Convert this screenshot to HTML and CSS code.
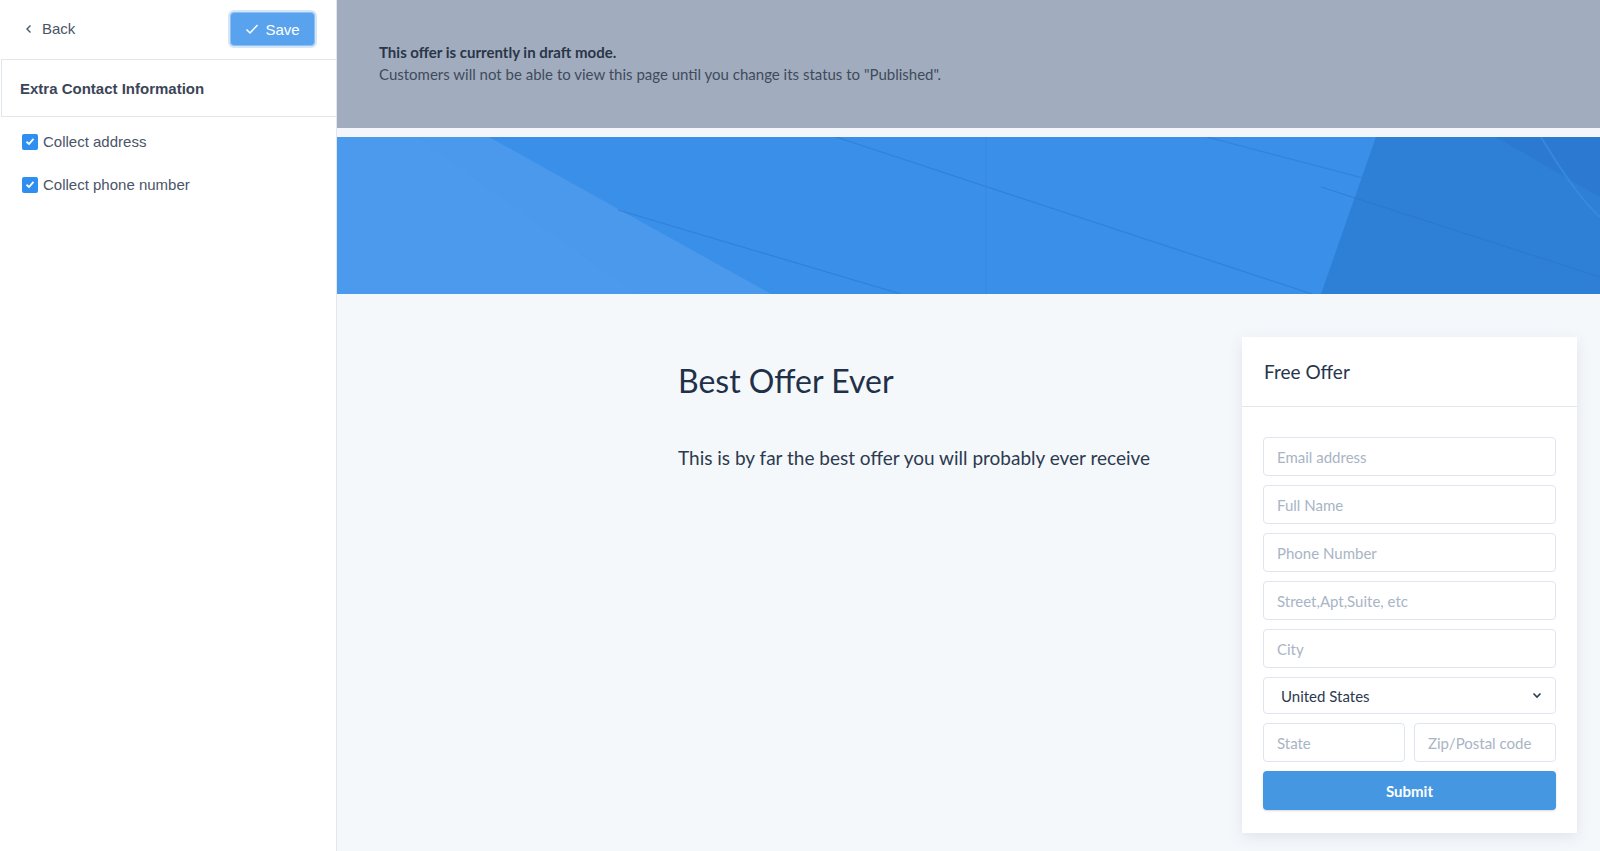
FILE: index.html
```html
<!DOCTYPE html>
<html>
<head>
    <title>Offer Editor</title>
    <link rel="stylesheet" href="styles.css">
</head>
<body>
    <div class="app">
        <aside class="sidebar">
            <div class="sidebar-top">
                <a class="back-link" href="#">
                    <svg width="10" height="10" viewBox="0 0 10 10"><path d="M6.5 1.5 L3 5 L6.5 8.5" fill="none" stroke="#4a5468" stroke-width="1.4"/></svg>
                    Back
                </a>
                <button class="save-btn">
                    <svg width="14" height="12" viewBox="0 0 14 12"><path d="M1.5 6.5 L5 10 L12.5 2" fill="none" stroke="#fff" stroke-width="1.5"/></svg>
                    Save
                </button>
            </div>
            <div class="section-title">Extra Contact Information</div>
            <div class="options">
                <label class="option"><span class="checkbox"><svg width="10" height="9" viewBox="0 0 10 9"><path d="M1.5 4.8 L4 7 L8.5 1.8" fill="none" stroke="#fff" stroke-width="1.8"/></svg></span>Collect address</label>
                <label class="option"><span class="checkbox"><svg width="10" height="9" viewBox="0 0 10 9"><path d="M1.5 4.8 L4 7 L8.5 1.8" fill="none" stroke="#fff" stroke-width="1.8"/></svg></span>Collect phone number</label>
            </div>
        </aside>

        <main class="preview">
            <div class="draft-banner">
                <strong>This offer is currently in draft mode.</strong>
                <p>Customers will not be able to view this page until you change its status to "Published".</p>
            </div>
            <div class="hero">
                <svg class="hero-art" viewBox="0 0 1263 157" preserveAspectRatio="none">
                    <rect width="1263" height="157" fill="#3a8fe9"/>
                    <polygon points="0,0 152,0 434,157 0,157" fill="#4a99ec"/>
                    <polygon points="0,0 80,0 300,157 0,157" fill="#4d9bed" opacity="0.5"/>
                    <line x1="281" y1="73" x2="564" y2="157" stroke="#2f7cd3" stroke-width="1.2" opacity="0.7"/>
                    <line x1="499" y1="0" x2="975" y2="157" stroke="#2f7cd3" stroke-width="1.2" opacity="0.7"/>
                    <line x1="870" y1="0" x2="1263" y2="103" stroke="#2f7cd3" stroke-width="1.2" opacity="0.6"/>
                    <line x1="649" y1="0" x2="649" y2="157" stroke="#3585df" stroke-width="1" opacity="0.5"/>
                    <polygon points="1039,0 1263,0 1263,157 984,157" fill="#2e7fd6"/>
                    <polygon points="1159,0 1263,0 1263,60" fill="#2a78cf" opacity="0.8"/>
                    <path d="M1204 0 Q1240 60 1263 80" fill="none" stroke="#3a8be2" stroke-width="2" opacity="0.8"/>
                    <line x1="984" y1="50" x2="1263" y2="140" stroke="#2a74c8" stroke-width="1" opacity="0.6"/>
                </svg>
            </div>
            <div class="content">
                <div class="offer-text">
                    <h1>Best Offer Ever</h1>
                    <p>This is by far the best offer you will probably ever receive</p>
                </div>
                <div class="card">
                    <div class="card-header">Free Offer</div>
                    <form class="card-body">
                        <input type="text" placeholder="Email address">
                        <input type="text" placeholder="Full Name">
                        <input type="text" placeholder="Phone Number">
                        <input type="text" placeholder="Street,Apt,Suite, etc">
                        <input type="text" placeholder="City">
                        <div class="select-wrap">
                            <select>
                                <option>United States</option>
                            </select>
                            <svg class="chevron" width="10" height="7" viewBox="0 0 10 7"><path d="M1.5 1.5 L5 5 L8.5 1.5" fill="none" stroke="#2c3a4f" stroke-width="1.6"/></svg>
                        </div>
                        <div class="row">
                            <input type="text" placeholder="State">
                            <input type="text" placeholder="Zip/Postal code">
                        </div>
                        <button type="button" class="submit-btn">Submit</button>
                    </form>
                </div>
            </div>
        </main>
    </div>
</body>
</html>
```

FILE: styles.css
```css
* {
    box-sizing: border-box;
}
body {
    margin: 0;
    font-family: "Liberation Sans", Arial, sans-serif;
    background-color: #f5f8fb;
    color: #2c3a4f;
}
.app {
    display: flex;
    height: 851px;
    overflow: hidden;
}

/* sidebar */
.sidebar {
    width: 337px;
    flex-shrink: 0;
    background-color: #fff;
    border-right: 1px solid #e3e7ed;
}
.sidebar-top {
    height: 59px;
    display: flex;
    align-items: center;
    justify-content: space-between;
    padding: 0 21px 2px 24px;
}
.back-link {
    display: flex;
    align-items: center;
    gap: 8px;
    color: #4a5468;
    text-decoration: none;
    font-size: 15px;
}
.save-btn {
    display: flex;
    align-items: center;
    justify-content: center;
    gap: 6px;
    width: 85px;
    height: 34px;
    margin-top: 1px;
    background-color: #58a2ee;
    color: #fff;
    font-family: "Liberation Sans", Arial, sans-serif;
    font-size: 15px;
    border: 1px solid #8fbff2;
    border-radius: 4px;
    box-shadow: 0 0 0 2px #d4e6fa;
}
.section-title {
    height: 58px;
    display: flex;
    align-items: center;
    padding-left: 18px;
    margin-left: 1px;
    border: 1px solid #e1e5ec;
    border-right: none;
    font-size: 15px;
    font-weight: bold;
    color: #3c4558;
}
.options {
    padding: 16px 0 0 22px;
}
.option {
    display: flex;
    align-items: center;
    gap: 5px;
    height: 17px;
    margin-bottom: 26px;
    font-size: 15px;
    color: #4a5468;
}
.checkbox {
    width: 16px;
    height: 16px;
    border-radius: 2px;
    background-color: #2f8ff0;
    display: flex;
    align-items: center;
    justify-content: center;
}

/* preview */
.preview {
    flex: 1;
    font-family: Lato, "Open Sans", sans-serif;
    display: flex;
    flex-direction: column;
}
.draft-banner {
    background-color: #a1adbe;
    padding: 42px 0 0 42px;
    font-size: 15px;
    color: #2a3547;
    border-bottom: 9px solid #f3f7fb;
    height: 137px;
}
.draft-banner strong {
    display: block;
    line-height: 20px;
}
.draft-banner p {
    margin: 2px 0 0;
    line-height: 20px;
    color: #3f4a5c;
}
.hero {
    height: 157px;
}
.hero-art {
    display: block;
    width: 100%;
    height: 157px;
}
.content {
    flex: 1;
    display: flex;
    padding: 43px 23px 0 341px;
}
.offer-text {
    flex: 1;
}
.offer-text h1 {
    margin: 24px 0 0;
    font-size: 32px;
    font-weight: normal;
    line-height: 40px;
    color: #1f3049;
}
.offer-text p {
    margin: 45px 0 0;
    font-size: 19px;
    line-height: 24px;
    color: #2c3a4f;
}
.card {
    width: 335px;
    height: 496px;
    background-color: #fff;
    box-shadow: 0 4px 14px rgba(40, 60, 90, 0.1);
}
.card-header {
    height: 70px;
    display: flex;
    align-items: center;
    padding-left: 22px;
    font-size: 19px;
    color: #26354b;
    border-bottom: 1px solid #e3e8ee;
}
.card-body {
    padding: 30px 21px 21px;
    display: flex;
    flex-direction: column;
    gap: 9px;
}
.card-body input,
.card-body select {
    width: 100%;
    height: 39px;
    padding: 0 13px;
    border: 1px solid #dfe5ee;
    border-radius: 4px;
    font-family: Lato, "Open Sans", sans-serif;
    font-size: 15px;
    color: #2c3a4f;
    background-color: #fff;
}
.card-body input::placeholder {
    color: #a9b4c5;
}
.select-wrap {
    position: relative;
}
.card-body select {
    height: 37px;
    padding-left: 17px;
    appearance: none;
    color: #2c3a4f;
}
.chevron {
    position: absolute;
    right: 14px;
    top: 15px;
}
.row {
    display: flex;
    gap: 9px;
}
.submit-btn {
    height: 39px;
    border: none;
    border-radius: 4px;
    background-color: #4497e0;
    color: #fff;
    font-family: Lato, "Open Sans", sans-serif;
    font-size: 15px;
    font-weight: bold;
    box-shadow: 0 1px 2px rgba(0, 0, 0, 0.15);
}
```
